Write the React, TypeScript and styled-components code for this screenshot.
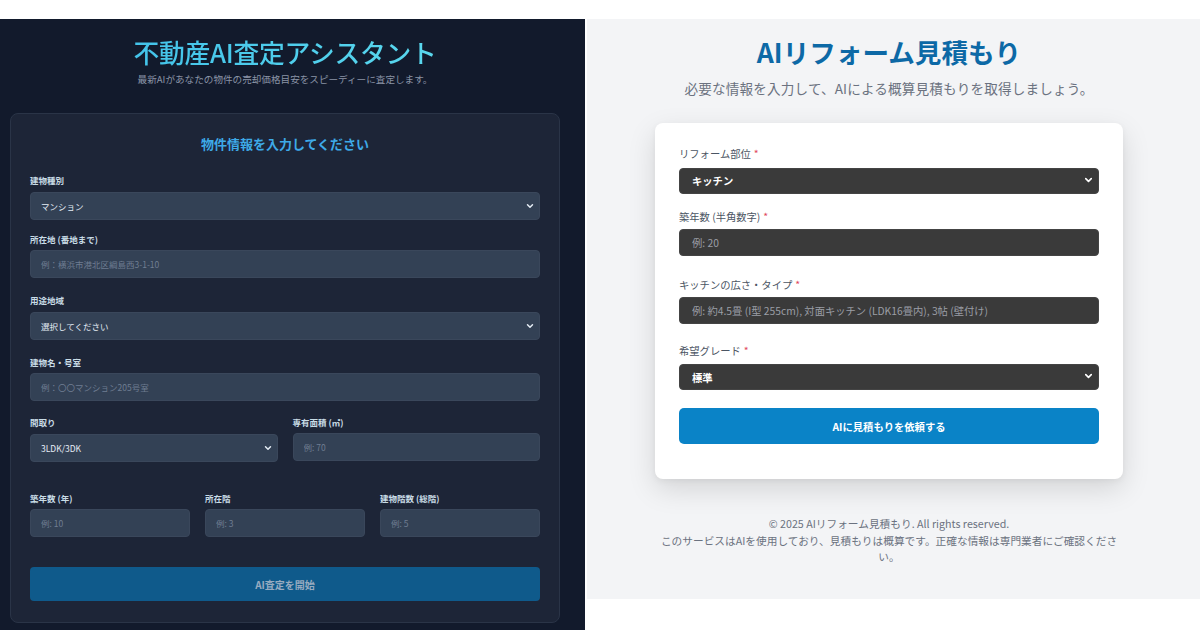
import React from 'react';
import styled, { createGlobalStyle } from 'styled-components';
import { ChevronDown } from 'lucide-react';

const GlobalStyle = createGlobalStyle`
  html, body {
    margin: 0;
    padding: 0;
    background: #ffffff;
    font-family: "Noto Sans CJK JP", "Noto Sans", sans-serif;
  }
  * { box-sizing: border-box; }
`;

const Page = styled.div`
  width: 1200px;
  height: 630px;
  overflow: hidden;
  padding-top: 19px;
  display: flex;
  align-items: flex-start;
  gap: 2px;
  background: #ffffff;
`;

/* ---------- left: dark appraisal app ---------- */

const DarkPanel = styled.div`
  width: 585px;
  height: 620px;
  flex-shrink: 0;
  background: #121a2c;
  padding: 18px 25px 0 10px;
  display: flex;
  flex-direction: column;
  align-items: center;
`;

const DarkTitle = styled.h1`
  margin: 0;
  font-size: 25.8px;
  line-height: 30px;
  font-weight: 500;
  letter-spacing: -0.3px;
  background: linear-gradient(90deg, #43c3ea 0%, #5ad8ee 100%);
  -webkit-background-clip: text;
  background-clip: text;
  color: transparent;
`;

const DarkSub = styled.p`
  margin: 5px 0 0;
  font-size: 9.6px;
  line-height: 14px;
  color: #8a94a6;
`;

const DarkCard = styled.div`
  width: 100%;
  margin-top: 27px;
  background: #1d2537;
  border: 1px solid #2a3447;
  border-radius: 8px;
  padding: 21px 19px 21px;
`;

const CardHeading = styled.h2`
  margin: 0 0 21px;
  text-align: center;
  font-size: 13px;
  line-height: 18px;
  font-weight: 700;
  color: #3eaae8;
`;

const DarkField = styled.div<{ $mb?: number }>`
  display: flex;
  flex-direction: column;
  gap: 5px;
  margin-bottom: ${p => (p.$mb ?? 15)}px;
  min-width: 0;
`;

const DarkLabel = styled.label`
  font-size: 8.5px;
  line-height: 12px;
  font-weight: 700;
  color: #c9dce6;
`;

const SelectWrap = styled.div`
  position: relative;
  width: 100%;
`;

const darkControl = `
  width: 100%;
  height: 28px;
  border-radius: 4px;
  border: 1px solid #3a475b;
  background: #334155;
  padding: 0 10px;
  font-family: "Noto Sans CJK JP", "Noto Sans", sans-serif;
  font-size: 8.5px;
  color: #e5edf5;
  outline: none;
`;

const DarkSelect = styled.select`
  ${darkControl}
  appearance: none;
  -webkit-appearance: none;
`;

const DarkInput = styled.input`
  ${darkControl}
  &::placeholder { color: #6f7d92; }
`;

const Chevron = styled.span<{ $color: string }>`
  position: absolute;
  right: 5px;
  top: 50%;
  transform: translateY(-50%);
  display: flex;
  color: ${p => p.$color};
  pointer-events: none;
`;

const Grid = styled.div<{ $cols: number; $mb: number }>`
  display: grid;
  grid-template-columns: repeat(${p => p.$cols}, 1fr);
  column-gap: 15px;
  margin-bottom: ${p => p.$mb}px;
`;

const DarkButton = styled.button`
  width: 100%;
  height: 34px;
  border: none;
  border-radius: 4px;
  background: #0f5a8b;
  color: #97abc0;
  font-family: "Noto Sans CJK JP", "Noto Sans", sans-serif;
  font-size: 10px;
  font-weight: 700;
`;

/* ---------- right: light reform estimate app ---------- */

const LightPanel = styled.div`
  flex: 1;
  height: 580px;
  background: #f3f4f6;
  padding: 16px 0 0 68px;
`;

const LightColumn = styled.div`
  width: 468px;
  display: flex;
  flex-direction: column;
  align-items: center;
`;

const LightTitle = styled.h1`
  margin: 0;
  font-size: 26.6px;
  line-height: 34px;
  font-weight: 700;
  color: #0d69a6;
`;

const LightSub = styled.p`
  margin: 9px 0 0;
  font-size: 13.6px;
  line-height: 20px;
  letter-spacing: 0.15px;
  color: #6b7280;
  white-space: nowrap;
`;

const LightCard = styled.div`
  width: 100%;
  margin-top: 25px;
  background: #ffffff;
  border-radius: 8px;
  padding: 24px 24px 35px;
  box-shadow: 0 10px 28px rgba(0, 0, 0, 0.13), 0 2px 6px rgba(0, 0, 0, 0.05);
`;

const LightField = styled.div<{ $mb: number }>`
  display: flex;
  flex-direction: column;
  gap: 5px;
  margin-bottom: ${p => p.$mb}px;
`;

const LightLabel = styled.label`
  font-size: 10.3px;
  line-height: 14px;
  color: #4b5563;
  span { color: #e0465a; margin-left: 3px; }
`;

const lightControl = `
  width: 100%;
  border-radius: 4px;
  border: 1px solid #444;
  background: #3a3a3a;
  padding: 0 12px;
  font-family: "Noto Sans CJK JP", "Noto Sans", sans-serif;
  font-size: 10.3px;
  color: #ffffff;
  outline: none;
`;

const LightSelect = styled.select`
  ${lightControl}
  height: 26px;
  font-weight: 700;
  appearance: none;
  -webkit-appearance: none;
`;

const LightInput = styled.input`
  ${lightControl}
  height: 27px;
  &::placeholder { color: #9a9ea6; }
`;

const LightButton = styled.button`
  width: 100%;
  height: 36px;
  border: none;
  border-radius: 5px;
  background: #0a83c7;
  color: #ffffff;
  font-family: "Noto Sans CJK JP", "Noto Sans", sans-serif;
  font-size: 10.3px;
  font-weight: 700;
`;

const Footer = styled.footer`
  margin-top: 37px;
  width: 468px;
  text-align: center;
  font-size: 10.7px;
  line-height: 16.5px;
  color: #6b7280;
`;

function DarkSel({ value }: { value: string }) {
  return (
    <SelectWrap>
      <DarkSelect defaultValue={value}>
        <option>{value}</option>
      </DarkSelect>
      <Chevron $color="#e5edf5">
        <ChevronDown size={10} strokeWidth={3.5} />
      </Chevron>
    </SelectWrap>
  );
}

function LightSel({ value }: { value: string }) {
  return (
    <SelectWrap>
      <LightSelect defaultValue={value}>
        <option>{value}</option>
      </LightSelect>
      <Chevron $color="#ffffff">
        <ChevronDown size={11} strokeWidth={3.5} />
      </Chevron>
    </SelectWrap>
  );
}

export default function App() {
  return (
    <>
      <GlobalStyle />
      <Page>
        <DarkPanel>
          <DarkTitle>不動産AI査定アシスタント</DarkTitle>
          <DarkSub>最新AIがあなたの物件の売却価格目安をスピーディーに査定します。</DarkSub>

          <DarkCard>
            <CardHeading>物件情報を入力してください</CardHeading>

            <DarkField $mb={13}>
              <DarkLabel>建物種別</DarkLabel>
              <DarkSel value="マンション" />
            </DarkField>
            <DarkField $mb={16}>
              <DarkLabel>所在地 (番地まで)</DarkLabel>
              <DarkInput placeholder="例：横浜市港北区綱島西3-1-10" />
            </DarkField>
            <DarkField $mb={16}>
              <DarkLabel>用途地域</DarkLabel>
              <DarkSel value="選択してください" />
            </DarkField>
            <DarkField>
              <DarkLabel>建物名・号室</DarkLabel>
              <DarkInput placeholder="例：〇〇マンション205号室" />
            </DarkField>

            <Grid $cols={2} $mb={30}>
              <DarkField $mb={0}>
                <DarkLabel>間取り</DarkLabel>
                <DarkSel value="3LDK/3DK" />
              </DarkField>
              <DarkField $mb={0}>
                <DarkLabel>専有面積 (㎡)</DarkLabel>
                <DarkInput placeholder="例: 70" />
              </DarkField>
            </Grid>

            <Grid $cols={3} $mb={30}>
              <DarkField $mb={0}>
                <DarkLabel>築年数 (年)</DarkLabel>
                <DarkInput placeholder="例: 10" />
              </DarkField>
              <DarkField $mb={0}>
                <DarkLabel>所在階</DarkLabel>
                <DarkInput placeholder="例: 3" />
              </DarkField>
              <DarkField $mb={0}>
                <DarkLabel>建物階数 (総階)</DarkLabel>
                <DarkInput placeholder="例: 5" />
              </DarkField>
            </Grid>

            <DarkButton>AI査定を開始</DarkButton>
          </DarkCard>
        </DarkPanel>

        <LightPanel>
          <LightColumn>
            <LightTitle>AIリフォーム見積もり</LightTitle>
            <LightSub>必要な情報を入力して、AIによる概算見積もりを取得しましょう。</LightSub>

            <LightCard>
              <LightField $mb={16}>
                <LightLabel>リフォーム部位<span>*</span></LightLabel>
                <LightSel value="キッチン" />
              </LightField>
              <LightField $mb={22}>
                <LightLabel>築年数 (半角数字)<span>*</span></LightLabel>
                <LightInput placeholder="例: 20" />
              </LightField>
              <LightField $mb={20}>
                <LightLabel>キッチンの広さ・タイプ<span>*</span></LightLabel>
                <LightInput placeholder="例: 約4.5畳 (I型 255cm), 対面キッチン (LDK16畳内), 3帖 (壁付け)" />
              </LightField>
              <LightField $mb={18}>
                <LightLabel>希望グレード<span>*</span></LightLabel>
                <LightSel value="標準" />
              </LightField>
              <LightButton>AIに見積もりを依頼する</LightButton>
            </LightCard>

            <Footer>
              © 2025 AIリフォーム見積もり. All rights reserved.
              <br />
              このサービスはAIを使用しており、見積もりは概算です。正確な情報は専門業者にご確認ください。
            </Footer>
          </LightColumn>
        </LightPanel>
      </Page>
    </>
  );
}
